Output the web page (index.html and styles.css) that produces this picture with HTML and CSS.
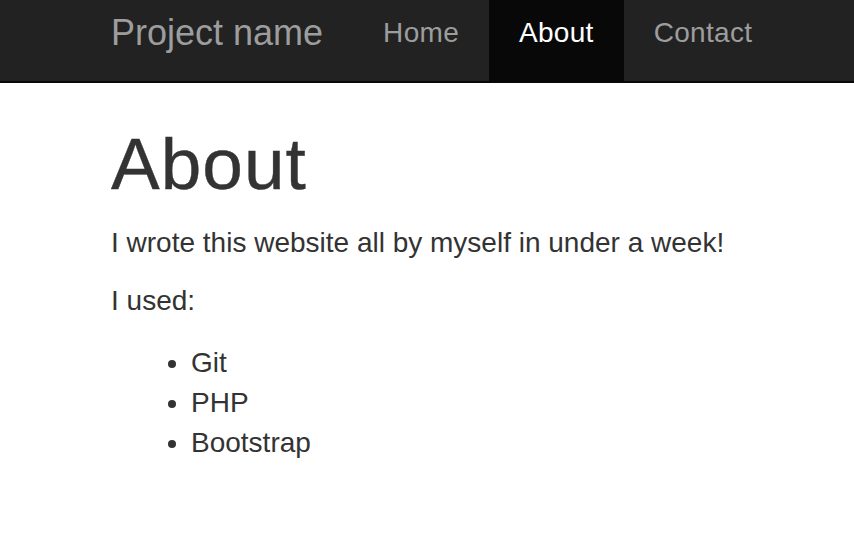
FILE: index.html
```html
<!DOCTYPE html>
<html lang="en">
<head>
<meta charset="utf-8">
<title>About</title>
<link rel="stylesheet" href="styles.css">
</head>
<body>
<nav class="navbar">
  <div class="container nav-inner">
    <a class="brand" href="#">Project name</a>
    <ul class="nav">
      <li><a href="#">Home</a></li>
      <li class="active"><a href="#">About</a></li>
      <li><a href="#">Contact</a></li>
    </ul>
  </div>
</nav>
<main class="container content">
  <h1>About</h1>
  <p>I wrote this website all by myself in under a week!</p>
  <p>I used:</p>
  <ul class="list">
    <li>Git</li>
    <li>PHP</li>
    <li>Bootstrap</li>
  </ul>
</main>
</body>
</html>
```

FILE: styles.css
```css
html, body {
  margin: 0;
  padding: 0;
  background: #fff;
}
body {
  font-family: "Liberation Sans", Arial, Helvetica, sans-serif;
  color: #333;
  font-size: 28px;
  line-height: 40px;
}
.container {
  padding-left: 111px;
  padding-right: 30px;
}
.navbar {
  background: #222;
  border-bottom: 2px solid #080808;
  height: 81px;
}
.nav-inner {
  display: flex;
  height: 81px;
}
.brand {
  display: block;
  font-size: 36px;
  line-height: 40px;
  padding: 13px 30px 0 0;
  color: #9d9d9d;
  text-decoration: none;
}
.nav {
  display: flex;
  list-style: none;
  margin: 0;
  padding: 0;
}
.nav li a {
  display: block;
  height: 81px;
  box-sizing: border-box;
  padding: 13px 30px 0;
  font-size: 28px;
  line-height: 40px;
  letter-spacing: 0.3px;
  color: #9d9d9d;
  text-decoration: none;
}
.nav li.active a {
  background: #080808;
  color: #fff;
}
.content h1 {
  font-size: 73px;
  font-weight: 500;
  line-height: 78px;
  letter-spacing: 1px;
  margin: 42px 0 20px;
  -webkit-text-stroke: 0.4px #333;
}
.content p {
  margin: 0 0 18px;
}
.list {
  margin: 22px 0 0;
  padding-left: 80px;
}
```
